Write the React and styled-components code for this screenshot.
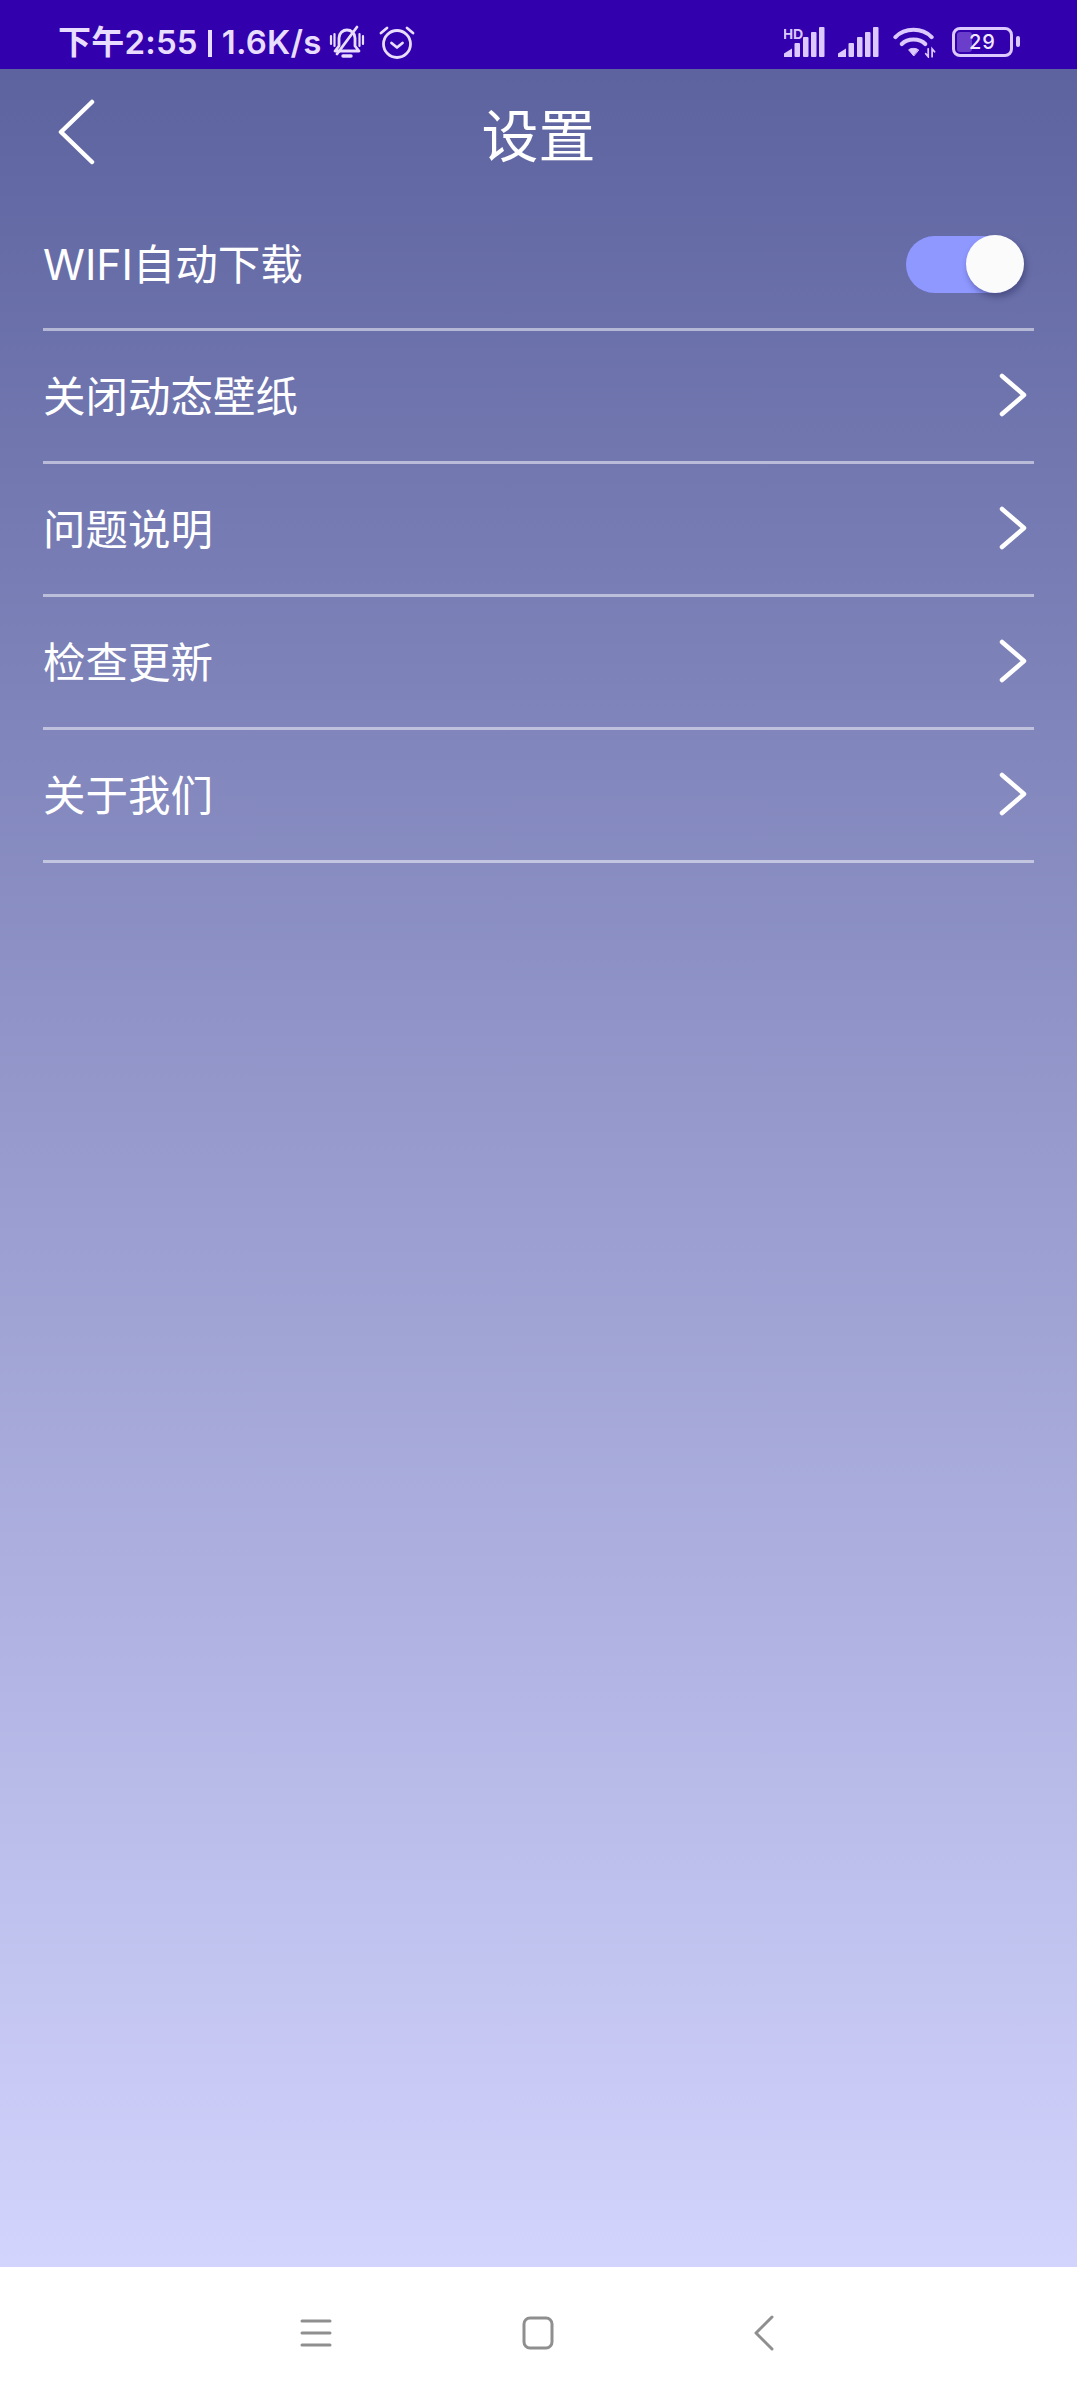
import React from "react";
import styled, { createGlobalStyle } from "styled-components";

const Global = createGlobalStyle`
  html, body { margin: 0; padding: 0; }
  body { font-family: "Noto Sans CJK SC", "Noto Sans", sans-serif; background: #fff; }
`;

const Screen = styled.div`
  width: 1077px;
  height: 2397px;
  display: flex;
  flex-direction: column;
  overflow: hidden;
`;

const StatusBar = styled.div`
  height: 69px;
  flex: none;
  background: #3300ad;
  color: #e8dcff;
  display: flex;
  align-items: center;
  justify-content: space-between;
  padding: 15px 58px 0 58px;
  box-sizing: border-box;
`;

const StatusLeft = styled.div`
  display: flex;
  align-items: center;
  height: 42px;
`;

const StatusText = styled.span`
  font-family: "Inter", "Noto Sans CJK SC", sans-serif;
  font-size: 33px;
  font-weight: 600;
  line-height: 42px;
  letter-spacing: 0.2px;
  white-space: nowrap;
`;

const StatusDivider = styled.span`
  display: inline-block;
  width: 4px;
  height: 27px;
  margin: 0 10px;
  background: #e8dcff;
  vertical-align: -3px;
`;

const StatusRight = styled.div`
  display: flex;
  align-items: center;
  margin-right: 6px;
`;

const Main = styled.main`
  flex: 1;
  background: linear-gradient(180deg, #5d639f 0%, #d2d4fd 100%);
  display: flex;
  flex-direction: column;
`;

const Header = styled.header`
  height: 132px;
  padding-bottom: 6px;
  box-sizing: border-box;
  position: relative;
  display: flex;
  align-items: center;
  justify-content: center;
  flex: none;
`;

const BackButton = styled.div`
  position: absolute;
  left: 57px;
  top: 30px;
  width: 40px;
  height: 68px;
`;

const Title = styled.h1`
  margin: 0;
  font-size: 57px;
  font-weight: 400;
  line-height: 70px;
  color: #fff;
`;

const List = styled.div`
  padding: 0 43px;
  display: flex;
  flex-direction: column;
`;

const Row = styled.div`
  height: 133px;
  box-sizing: border-box;
  border-bottom: 3px solid rgba(255, 255, 255, 0.5);
  display: flex;
  align-items: center;
  justify-content: space-between;
  padding-right: 6px;
  &:first-child {
    height: 130px;
  }
`;

const Label = styled.span`
  font-size: 42.5px;
  line-height: 56px;
  margin-top: ${(p) => (p.$cjk ? 2 : 0)}px;
  color: #fff;
  font-weight: 400;
  font-family: "Inter", "Noto Sans CJK SC", sans-serif;
`;

const Track = styled.div`
  width: 117px;
  height: 57px;
  border-radius: 29px;
  background: #8f98ff;
  position: relative;
  margin-right: 5px;
`;

const Knob = styled.div`
  position: absolute;
  right: -1px;
  top: -1px;
  width: 58px;
  height: 58px;
  border-radius: 50%;
  background: #fbfbfb;
  box-shadow: 2px 4px 6px rgba(40, 40, 90, 0.45);
`;

const NavBar = styled.nav`
  height: 130px;
  flex: none;
  background: #fff;
  display: grid;
  grid-template-columns: 222px 222px 230px;
  justify-content: start;
  justify-items: center;
  align-items: center;
  padding: 2px 0 0 205px;
  box-sizing: border-box;
`;

const Chevron = () => (
  <svg width="30" height="46" viewBox="0 0 30 46" fill="none" style={{ marginTop: -3 }}>
    <path d="M4 4 L26 23 L4 42" stroke="#fff" strokeWidth="4.5" strokeLinecap="round" strokeLinejoin="round" />
  </svg>
);

const BellOff = () => (
  <svg width="36" height="34" viewBox="0 0 36 34" fill="none" stroke="#e8dcff" strokeWidth="2.8" strokeLinecap="round" strokeLinejoin="round" style={{ marginLeft: 7 }}>
    <path d="M6 26 H30 L26 21 V13 C26 8 22 5 18 5 C14 5 10 8 10 13 V21 Z" />
    <path d="M14 31 H22" strokeWidth="3.4" />
    <path d="M28 2 L8 29" />
    <path d="M2 11 V19 M5.5 9 V21 M34 11 V19 M30.5 9 V21" strokeWidth="2.2" />
  </svg>
);

const Alarm = () => (
  <svg width="36" height="34" viewBox="0 0 36 34" fill="none" stroke="#e8dcff" strokeWidth="2.8" strokeLinecap="round" strokeLinejoin="round" style={{ marginLeft: 14 }}>
    <circle cx="18" cy="19" r="13.5" />
    <path d="M12.5 18 L18 22.5 L23.5 18" />
    <path d="M2 8 L8 3 M34 8 L28 3" />
  </svg>
);

const Signal = ({ hd }) => (
  <svg width="41" height="30" viewBox="0 0 41 30" fill="#dcc9ff">
    <path d="M0 30 V26.5 L8 21.5 V30 Z" />
    <rect x="10.5" y="16" width="5.5" height="14" rx="1" />
    <rect x="19" y="10" width="5.5" height="20" rx="1" />
    <rect x="27" y="5" width="5.5" height="25" rx="1" />
    <rect x="35" y="0" width="5.5" height="30" rx="1" />
    {hd && (
      <text x="-1" y="12" fontSize="14" fontWeight="700" fontFamily="Liberation Sans, sans-serif" fill="#dcc9ff">HD</text>
    )}
  </svg>
);

const Wifi = () => (
  <svg width="44" height="31" viewBox="0 0 45 31" fill="none" stroke="#dcc9ff" strokeWidth="4.2" strokeLinecap="round" style={{ marginLeft: 14 }}>
    <path d="M2.5 10 C12 0 30 0 39.5 10" />
    <path d="M9 17 C15 11 27 11 33 17" />
    <path d="M21 29 L16 23 C19 21 23 21 26 23 Z" fill="#dcc9ff" strokeWidth="1" strokeLinejoin="round" />
    <path d="M36 22 V30 L33.5 27 M40 30 V22 L42.5 25" strokeWidth="1.8" />
  </svg>
);

const Battery = styled.div`
  width: 61px;
  height: 30px;
  box-sizing: border-box;
  border: 3.5px solid #dcc9ff;
  border-radius: 8px;
  margin-left: 15px;
  position: relative;
  display: flex;
  align-items: center;
  justify-content: center;
  &::before {
    content: "";
    position: absolute;
    left: 2px;
    top: 2px;
    bottom: 2px;
    width: 15px;
    background: #6a3ecb;
    border-radius: 3px;
  }
  &::after {
    content: "";
    position: absolute;
    right: -9.5px;
    top: 6px;
    width: 4px;
    height: 11px;
    background: #dcc9ff;
    border-radius: 2px;
  }
`;

const BatteryText = styled.span`
  position: relative;
  font-family: "Inter", sans-serif;
  font-size: 20px;
  line-height: 24px;
  color: #f1e9ff;
  font-weight: 500;
  letter-spacing: 1px;
`;

const Spacer = styled.div`
  width: 13px;
`;

const items = ["关闭动态壁纸", "问题说明", "检查更新", "关于我们"];

export default function App() {
  return (
    <>
      <Global />
      <Screen>
        <StatusBar>
          <StatusLeft>
            <StatusText>
              下午2:55<StatusDivider />1.6K/s
            </StatusText>
            <BellOff />
            <Alarm />
          </StatusLeft>
          <StatusRight>
            <Signal hd />
            <Spacer />
            <Signal />
            <Wifi />
            <Battery>
              <BatteryText>29</BatteryText>
            </Battery>
          </StatusRight>
        </StatusBar>
        <Main>
          <Header>
            <BackButton>
              <svg width="40" height="68" viewBox="0 0 40 68" fill="none">
                <path d="M35 3 L4 33 L35 63" stroke="#fff" strokeWidth="4.5" strokeLinecap="round" strokeLinejoin="round" />
              </svg>
            </BackButton>
            <Title>设置</Title>
          </Header>
          <List>
            <Row>
              <Label>WIFI自动下载</Label>
              <Track>
                <Knob />
              </Track>
            </Row>
            {items.map((t) => (
              <Row key={t}>
                <Label $cjk>{t}</Label>
                <Chevron />
              </Row>
            ))}
          </List>
        </Main>
        <NavBar>
          <svg width="32" height="30" viewBox="0 0 32 30" fill="none" stroke="#8f8f8f" strokeWidth="3" strokeLinecap="round">
            <path d="M2 3 H30 M2 15 H30 M2 27 H30" />
          </svg>
          <svg width="32" height="34" viewBox="0 0 32 34" fill="none" stroke="#8f8f8f" strokeWidth="3">
            <rect x="2" y="2" width="28" height="30" rx="6" />
          </svg>
          <svg width="22" height="36" viewBox="0 0 22 36" fill="none" stroke="#8f8f8f" strokeWidth="3" strokeLinecap="round" strokeLinejoin="round">
            <path d="M19 2 L3 18 L19 34" />
          </svg>
        </NavBar>
      </Screen>
    </>
  );
}
